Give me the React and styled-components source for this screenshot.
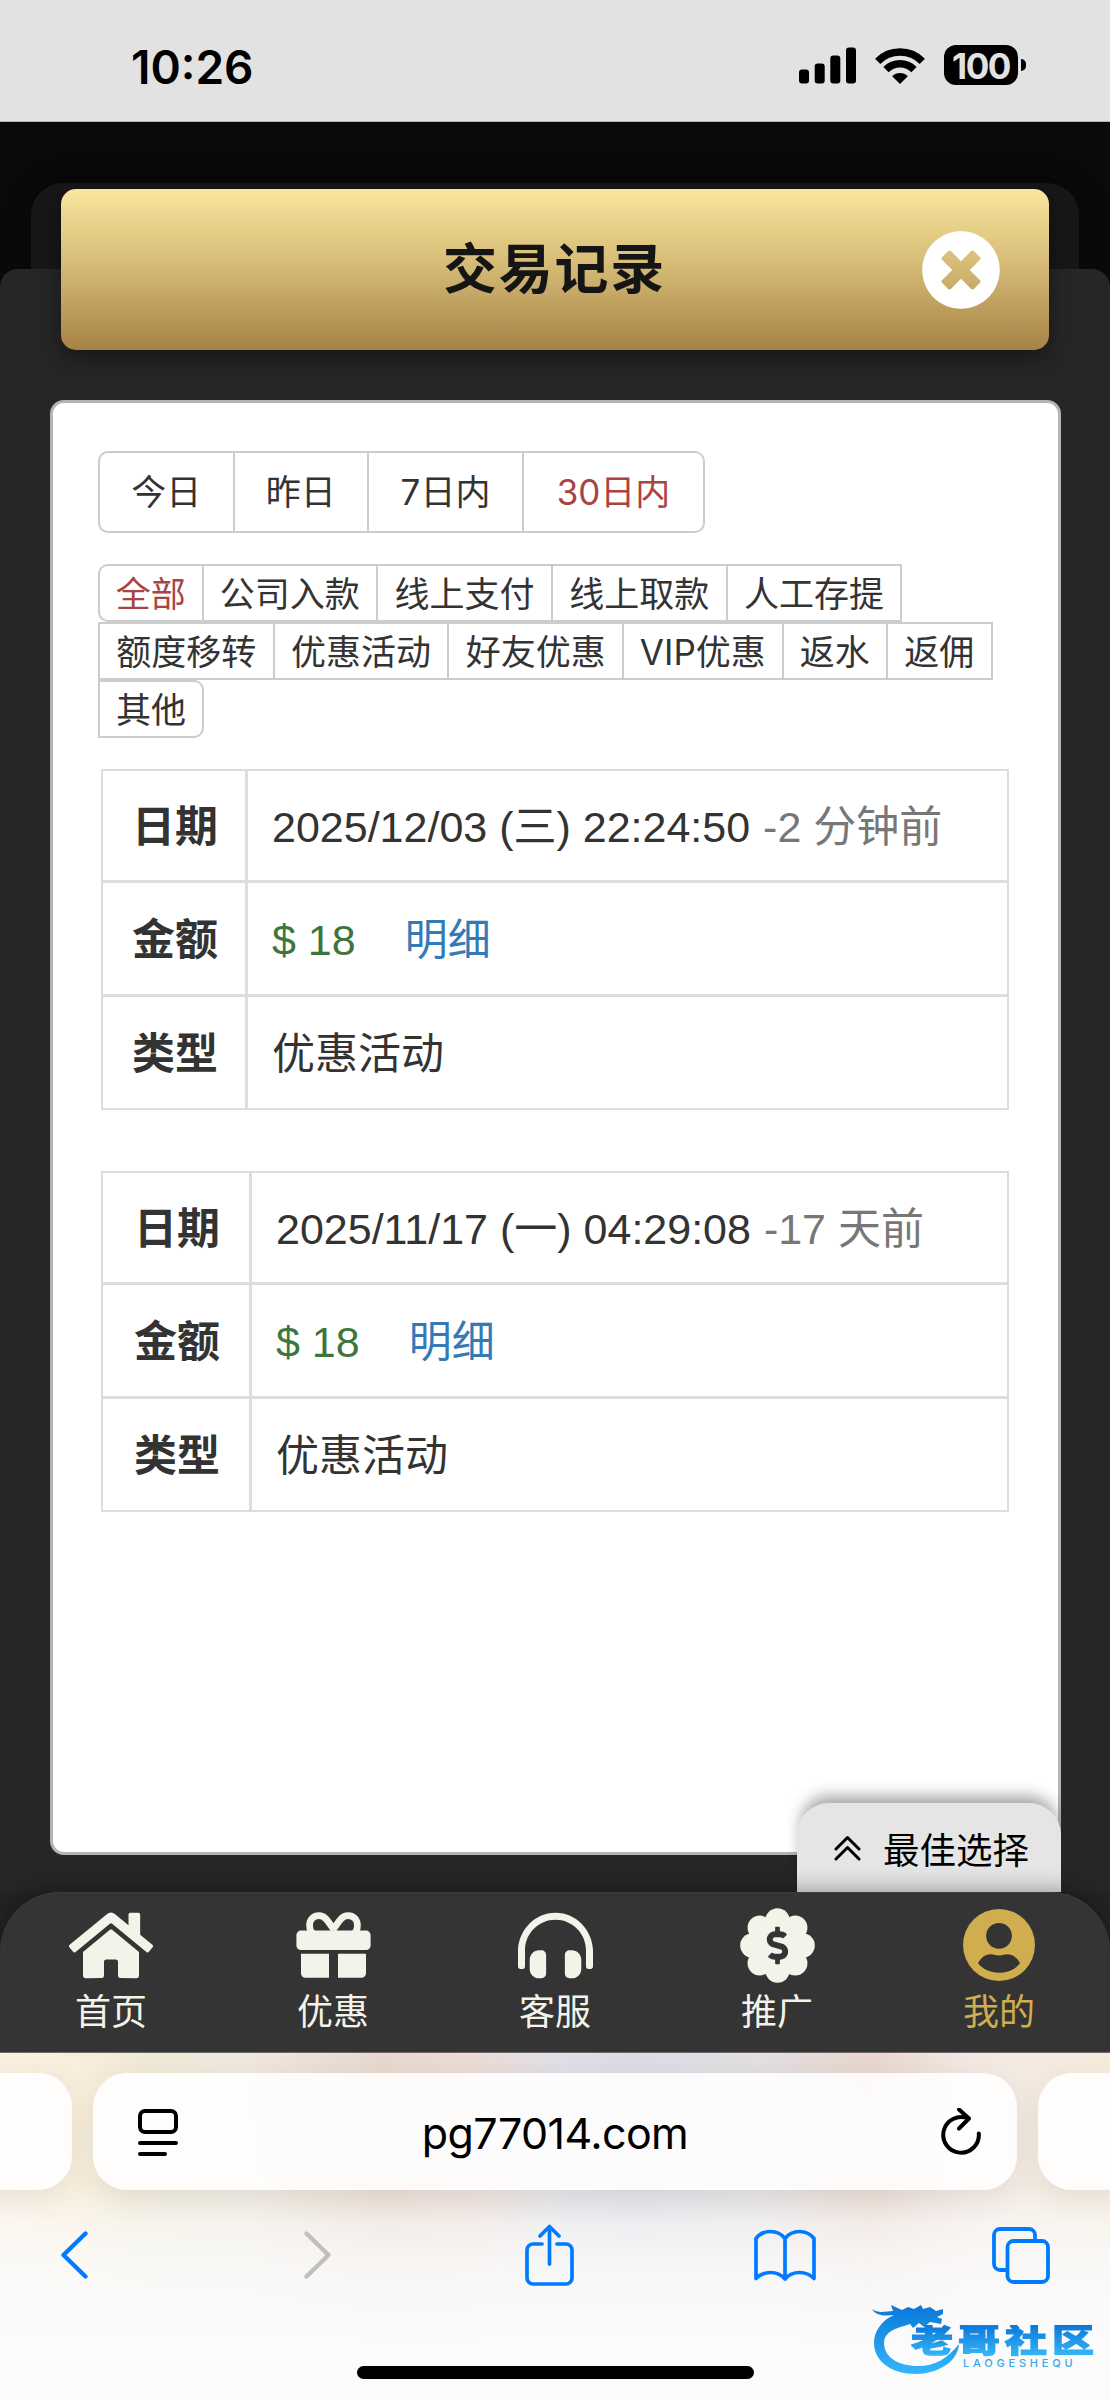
import React, { useState } from "react";
import styled, { createGlobalStyle } from "styled-components";
import {
	FaDollarSign,
	FaHeadphonesAlt,
	FaHome,
	FaTimesCircle,
} from "react-icons/fa";

const GlobalStyle = createGlobalStyle`
	body {
		margin: 0;
		background: #262626;
	}
	* {
		box-sizing: border-box;
	}
`;

const Page = styled.div`
	width: 1110px;
	height: 2400px;
	display: flex;
	flex-direction: column;
	position: relative;
	overflow: hidden;
	font-family: "Inter", "Noto Sans CJK SC", sans-serif;
	color: #333;
`;

//ios status bar
const StatusBar = styled.header`
	height: 122px;
	flex: none;
	display: flex;
	align-items: center;
	padding: 9px 84px 0 131px;
	background: #e2e2e2;
	border-bottom: 1px solid #b4b4b4;
	color: #000;
`;

const Clock = styled.div`
	padding-top: 3px;
	font-size: 46px;
	font-weight: 600;
	line-height: 60px;
	letter-spacing: 0;
	margin-right: auto;
`;

const StatusIcons = styled.div`
	display: flex;
	align-items: center;
	gap: 19px;

	svg {
		display: block;
	}
`;

const Battery = styled.div`
	display: flex;
	align-items: center;
	gap: 3px;

	&::after {
		content: "";
		width: 5px;
		height: 12px;
		border-radius: 0 6px 6px 0;
		background: #000;
	}
`;

const BatteryLevel = styled.div`
	width: 74px;
	height: 40px;
	border-radius: 12px;
	background: #000;
	color: #e2e2e2;
	font-size: 35px;
	font-weight: 700;
	line-height: 42px;
	text-align: center;
	letter-spacing: -1.5px;
`;

//sheets are stacked in the same grid cell
const Main = styled.main`
	height: 1770px;
	flex: none;
	display: grid;
	grid-template-columns: 1110px;
	grid-template-rows: 1770px;
	position: relative;
	background: #0a0a0a;

	> * {
		grid-area: 1 / 1;
	}
`;

const BackSheet = styled.div`
	margin: 61px 31px 0;
	border-radius: 32px 32px 0 0;
	background: #171717;
	box-shadow: 0 0 30px rgba(0, 0, 0, 0.35);
`;

const FrontSheet = styled.div`
	margin-top: 147px;
	border-radius: 18px 18px 0 0;
	background: #262626;
`;

const Content = styled.div`
	display: flex;
	flex-direction: column;
	padding: 67px 49px 0 50px;
`;

const TitleBar = styled.div`
	height: 161px;
	flex: none;
	margin: 0 12px 0 11px;
	padding: 0 48px 0 127px;
	display: flex;
	align-items: center;
	border-radius: 15px;
	background: linear-gradient(#fae69d, #d7bd78 45%, #a78245);
	box-shadow: 0 8px 22px rgba(0, 0, 0, 0.4);
`;

const Title = styled.h1`
	margin: 0;
	flex: 1;
	font-size: 54px;
	line-height: 60px;
	font-weight: 700;
	letter-spacing: 1.8px;
	text-align: center;
	color: #151515;
`;

const CloseButton = styled.button`
	padding: 0;
	border: none;
	background: none;
	color: white;
	font-size: 80px;
	line-height: 0;
`;

const Panel = styled.section`
	height: 1455px;
	flex: none;
	margin-top: 50px;
	padding: 48px 45px 0 45px;
	border: 3px solid #b4b4b4;
	border-radius: 14px;
	background: white;
`;

const FilterRow = styled.div`
	display: flex;
	margin-bottom: ${(p) => p.$gap || 0}px;
`;

const FilterButton = styled.button`
	width: ${(p) => p.$width + 2}px;
	height: ${(p) => (p.$large ? 82 : 58)}px;
	padding: ${(p) => (p.$large ? 0 : 2)}px 0 0;
	margin-right: -2px;
	border: 2px solid #ccc;
	border-radius: ${(p) => p.$radius || "0"};
	background: white;
	color: ${(p) => (p.$active ? "#a94442" : "#333")};
	font-family: inherit;
	font-size: 35px;
	line-height: 50px;
	white-space: nowrap;
`;

const Record = styled.table`
	width: 908px;
	height: 341px;
	margin: ${(p) => p.$top}px 0 0 3px;
	border-collapse: separate;
	border-spacing: 0;
	border: 2px solid #ddd;
	table-layout: fixed;
	font-family: "Liberation Sans", "Noto Sans CJK SC", sans-serif;
	font-size: 43px;
	line-height: 60px;

	th {
		width: ${(p) => p.$head}px;
		padding: 3px 0 0 2px;
		border-right: 3px solid #ddd;
	}
	td {
		padding: 3px 0 0 24px;
		white-space: nowrap;
	}
	tr + tr > * {
		border-top: 3px solid #ddd;
	}
`;

const Ago = styled.span`
	margin-left: 1px;
	color: #777;
`;

const Amount = styled.span`
	color: #3c763d;
`;

const DetailLink = styled.a`
	margin-left: 49px;
	color: #337ab7;
`;

//floats over the panel corner, tucked behind the tab bar
const BestChoice = styled.div`
	position: absolute;
	right: 49px;
	bottom: 0;
	width: 264px;
	height: 89px;
	display: flex;
	align-items: center;
	gap: 22px;
	padding: 6px 0 0 37px;
	border-radius: 32px 32px 0 0;
	background: #e5e5e5;
	box-shadow: 0 -11px 15px -4px rgba(0, 0, 0, 0.36);
	clip-path: inset(-40px 0 0 -10px);
	color: #000;
	font-size: 36.5px;
	line-height: 50px;

	svg {
		margin-bottom: 6px;
	}
`;

const TabBarWrapper = styled.div`
	height: 161px;
	flex: none;
	position: relative;
	background: #232323;
`;

const TabBar = styled.nav`
	height: 161px;
	display: flex;
	border-radius: 60px 60px 0 0;
	background: #343434;
	box-shadow: 0 -4px 20px rgba(0, 0, 0, 0.3), inset 0 1px 0 #3c3c3c;
	border-bottom: 1px solid #6f6868;
`;

const TabItem = styled.a`
	flex: 1;
	display: flex;
	flex-direction: column;
	align-items: center;
	color: ${(p) => (p.$active ? "#d0ae4f" : "#f4f3e9")};
	font-size: 36px;
	line-height: 52px;
`;

const TabIcon = styled.div`
	height: 94px;
	padding-top: 12px;
	display: flex;
	align-items: center;
	line-height: 0;
`;

//safari chrome
const Browser = styled.footer`
	height: 347px;
	flex: none;
	position: relative;
	display: flex;
	flex-direction: column;
	background:
		linear-gradient(
			rgba(251, 251, 251, 0),
			rgba(251, 251, 251, 0.1) 38%,
			rgba(251, 251, 251, 0.6) 50%,
			rgba(251, 251, 251, 0.85) 62%,
			#fbfbfb 82%
		),
		linear-gradient(
			to right,
			#faf0e2,
			#f8eedb 80px,
			#f0ead8 140px,
			#efe8de 250px,
			#e8d9ce 380px,
			#ecdcd7 480px,
			#e0e0e6 560px,
			#dcdde4 630px,
			#e3dfe2 760px,
			#e8d7ce 870px,
			#f3e9e4 970px,
			#f5ecdd
		);
`;

const AddressRow = styled.div`
	display: flex;
	gap: 21px;
	margin: 20px -30px 0;
`;

const Pill = styled.div`
	width: ${(p) => (p.$side ? "102px" : "924px")};
	height: 117px;
	flex: none;
	display: flex;
	align-items: center;
	padding: 0 36px 0 45px;
	border-radius: 34px;
	background: rgba(255, 255, 255, 0.88);
	box-shadow: 0 8px 30px rgba(60, 50, 30, 0.09);
	color: #000;
`;

const Url = styled.div`
	flex: 1;
	margin-right: 9px;
	padding-top: 2px;
	text-align: center;
	font-size: 43px;
	line-height: 60px;
	letter-spacing: -0.6px;
`;

const Toolbar = styled.div`
	height: 130px;
	display: grid;
	grid-template-columns: 243px 221px 229px 238px auto;
	align-items: center;
	padding-left: 61px;
	color: #007aff;
`;

const HomeIndicator = styled.div`
	width: 397px;
	height: 13px;
	margin: 46px auto 0;
	border-radius: 7px;
	background: #000;
`;

const Watermark = styled.div`
	position: absolute;
	left: 870px;
	bottom: 18px;
	width: 230px;
	height: 82px;
	padding: 25px 0 0 41px;
`;

const WatermarkLogo = styled.svg`
	position: absolute;
	left: 0;
	top: 0;
`;

const WatermarkName = styled.div`
	position: relative;
	height: 42px;
	font-family: "Liberation Sans", "Noto Sans CJK SC", sans-serif;
	font-size: 42px;
	line-height: 42px;
	font-weight: 900;
	letter-spacing: 5px;
	white-space: nowrap;
	transform: scaleY(0.76);
	transform-origin: 0 0;
	background: linear-gradient(#0a76d8, #37b9fb);
	background-clip: text;
	-webkit-text-stroke: 1.5px transparent;
	color: transparent;
`;

const WatermarkSub = styled.div`
	position: relative;
	margin: -11px 0 0 52px;
	font-size: 11px;
	line-height: 14px;
	letter-spacing: 3.8px;
	font-weight: 500;
	color: #3aa6ec;
`;

const Stroke = ({ width, height, weight = 4, color, children }) => (
	<svg
		width={width}
		height={height}
		viewBox={`0 0 ${width} ${height}`}
		fill="none"
		stroke={color || "currentColor"}
		strokeWidth={weight}
		strokeLinecap="round"
		strokeLinejoin="round"
	>
		{children}
	</svg>
);

const SignalIcon = () => (
	<svg width="57" height="37" viewBox="0 0 57 37">
		<rect x="0" y="22.5" width="10" height="14" rx="3" />
		<rect x="15.7" y="16.5" width="10" height="20" rx="3" />
		<rect x="31.3" y="8.5" width="10" height="28" rx="3" />
		<rect x="47" y="0.5" width="10" height="36" rx="3" />
	</svg>
);

const WifiIcon = () => (
	<svg width="50" height="37" viewBox="0 0 50 37">
		<g fill="none" stroke="#000" strokeWidth="7.4">
			<path d="M2.7 14.3a31.5 31.5 0 0 1 44.6 0" />
			<path d="M11 22.6a19.8 19.8 0 0 1 28 0" />
		</g>
		<path d="M25 37l-7.8-7.8a11 11 0 0 1 15.6 0z" />
	</svg>
);

const GiftIcon = () => (
	<svg width="75" height="66" viewBox="0 0 75 66" fill="currentColor">
		<g fill="none" stroke="currentColor" strokeWidth="6.8">
			<path d="M38 18C32 9 29 3.6 23 3.6C16.5 3.6 13.6 8.5 13.6 13.5C13.6 17 15 20.5 18 22" />
			<path d="M37 18C43 9 46 3.6 52 3.6C58.5 3.6 61.4 8.5 61.4 13.5C61.4 17 60 20.5 57 22" />
		</g>
		<rect x="0.4" y="18.6" width="74.2" height="19.4" rx="4.5" />
		<path d="M5 41.7h28v24H9.5a4.5 4.5 0 0 1-4.5-4.5z" />
		<path d="M42 41.7h28v19.5a4.5 4.5 0 0 1-4.5 4.5H42z" />
	</svg>
);

const lobes = [0, 45, 90, 135, 180, 225, 270, 315];

const BadgeIcon = () => (
	<svg width="75" height="75" viewBox="0 0 75 75" fill="currentColor">
		<circle cx="37.5" cy="37.5" r="27" />
		{lobes.map((a) => (
			<circle
				key={a}
				cx="37.5"
				cy="12.4"
				r="12.2"
				transform={`rotate(${a} 37.5 37.5)`}
			/>
		))}
		<FaDollarSign x="18.5" y="18.5" size={38} color="#343434" />
	</svg>
);

const UserIcon = () => (
	<svg width="72" height="72" viewBox="0 0 72 72">
		<circle cx="36" cy="36" r="36" fill="currentColor" />
		<circle cx="36" cy="26.8" r="12.9" fill="#343434" />
		<path
			d="M15 54.3C17.5 49 22 45.2 27.5 45.2C30.5 45.2 32 46.4 36 46.4C40 46.4 41.5 45.2 44.5 45.2C50 45.2 54.5 49 57 54.3C52 60.3 44.5 63.8 36 63.8C27.5 63.8 20 60.3 15 54.3Z"
			fill="#343434"
		/>
	</svg>
);

const ranges = [
	{ label: "今日", width: 134.5, radius: "10px 0 0 10px" },
	{ label: "昨日", width: 134.5 },
	{ label: "7日内", width: 155 },
	{ label: "30日内", width: 181, radius: "0 10px 10px 0" },
];

const categories = [
	[
		{ label: "全部", width: 103.5, radius: "10px 0 0 10px" },
		{ label: "公司入款", width: 174.7 },
		{ label: "线上支付", width: 174.7 },
		{ label: "线上取款", width: 174.7 },
		{ label: "人工存提", width: 174.7 },
	],
	[
		{ label: "额度移转", width: 174.7 },
		{ label: "优惠活动", width: 174.7 },
		{ label: "好友优惠", width: 174.7 },
		{ label: "VIP优惠", width: 159.5 },
		{ label: "返水", width: 104.5 },
		{ label: "返佣", width: 104.5 },
	],
	[{ label: "其他", width: 104, radius: "0 10px 10px 0" }],
];

const records = [
	{
		date: "2025/12/03 (三) 22:24:50",
		ago: "-2 分钟前",
		amount: "$ 18",
		type: "优惠活动",
		head: 145,
		top: 31,
	},
	{
		date: "2025/11/17 (一) 04:29:08",
		ago: "-17 天前",
		amount: "$ 18",
		type: "优惠活动",
		head: 149,
		top: 61,
	},
];

const tabs = [
	{ label: "首页", icon: <FaHome style={{ width: 84, height: 75 }} /> },
	{ label: "优惠", icon: <GiftIcon /> },
	{ label: "客服", icon: <FaHeadphonesAlt size={75} /> },
	{ label: "推广", icon: <BadgeIcon /> },
	{ label: "我的", icon: <UserIcon /> },
];

const App = () => {
	const [range, setRange] = useState("30日内");
	const [category, setCategory] = useState("全部");
	return (
		<Page>
			<GlobalStyle />
			<StatusBar>
				<Clock>10:26</Clock>
				<StatusIcons>
					<SignalIcon />
					<WifiIcon />
					<Battery>
						<BatteryLevel>100</BatteryLevel>
					</Battery>
				</StatusIcons>
			</StatusBar>

			<Main>
				<BackSheet />
				<FrontSheet />
				<Content>
					<TitleBar>
						<Title>交易记录</Title>
						<CloseButton>
							<FaTimesCircle />
						</CloseButton>
					</TitleBar>
					<Panel>
						<FilterRow $gap={31}>
							{ranges.map((r) => (
								<FilterButton
									key={r.label}
									$large
									$width={r.width}
									$radius={r.radius}
									$active={r.label === range}
									onClick={() => setRange(r.label)}
								>
									{r.label}
								</FilterButton>
							))}
						</FilterRow>
						{categories.map((row, i) => (
							<FilterRow key={i}>
								{row.map((c) => (
									<FilterButton
										key={c.label}
										$width={c.width}
										$radius={c.radius}
										$active={c.label === category}
										onClick={() => setCategory(c.label)}
									>
										{c.label}
									</FilterButton>
								))}
							</FilterRow>
						))}
						{records.map((r) => (
							<Record key={r.date} $head={r.head} $top={r.top}>
								<tbody>
									<tr>
										<th>日期</th>
										<td>
											{r.date} <Ago>{r.ago}</Ago>
										</td>
									</tr>
									<tr>
										<th>金额</th>
										<td>
											<Amount>{r.amount}</Amount>
											<DetailLink>明细</DetailLink>
										</td>
									</tr>
									<tr>
										<th>类型</th>
										<td>{r.type}</td>
									</tr>
								</tbody>
							</Record>
						))}
					</Panel>
				</Content>
				<BestChoice>
					<Stroke width={27} height={26} weight={3}>
						<path d="M2 14L13.5 2.5L25 14M2 24L13.5 12.5L25 24" />
					</Stroke>
					最佳选择
				</BestChoice>
			</Main>

			<TabBarWrapper>
				<TabBar>
					{tabs.map((t) => (
						<TabItem key={t.label} $active={t.label === "我的"}>
							<TabIcon>{t.icon}</TabIcon>
							{t.label}
						</TabItem>
					))}
				</TabBar>
			</TabBarWrapper>

			<Browser>
				<AddressRow>
					<Pill $side />
					<Pill>
						<Stroke width={40} height={48}>
							<rect x="2" y="3" width="36" height="21" rx="5" />
							<path d="M2 35h36M2 46h25" />
						</Stroke>
						<Url>pg77014.com</Url>
						<Stroke width={40} height={48}>
							<path d="M27 10.5A17.8 17.8 0 1 0 37.8 25.5" />
							<path d="M18 1.5L28 10.5L18 20.5" />
						</Stroke>
					</Pill>
					<Pill $side />
				</AddressRow>
				<Toolbar>
					<Stroke width={27} height={48} weight={4.3}>
						<path d="M24.5 2.5L2.5 24L24.5 45.5" />
					</Stroke>
					<Stroke width={27} height={48} weight={4.3} color="#c0bfbd">
						<path d="M2.5 2.5L24.5 24L2.5 45.5" />
					</Stroke>
					<Stroke width={49} height={62} weight={3.7}>
						<path d="M17 20H8a6 6 0 0 0-6 6V54a6 6 0 0 0 6 6H41a6 6 0 0 0 6-6V26a6 6 0 0 0-6-6H32" />
						<path d="M24.5 40V2.5M15 12L24.5 2.5L34 12" />
					</Stroke>
					<Stroke width={62} height={52} weight={3.7}>
						<path d="M31 9.5C27.5 5 22.5 2.5 16.5 2.5S5.5 5 2 9.5V49.5C5.5 46 10.5 43.5 16.5 43.5S27.5 46 31 50C34.5 46 39.5 43.5 45.5 43.5S56.500 46 60 49.5V9.5C56.500 5 51.500 2.500 45.500 2.500S34.500 5 31 9.500V50" />
					</Stroke>
					<Stroke width={58} height={58} weight={3.8}>
						<rect x="15.5" y="15" width="40.5" height="41" rx="6" />
						<path d="M43 15V9a6 6 0 0 0-6-6H8a6 6 0 0 0-6 6V38a6 6 0 0 0 6 6h7" />
					</Stroke>
				</Toolbar>
				<HomeIndicator />
			</Browser>

			<Watermark>
				<WatermarkLogo width="96" height="76" viewBox="0 0 96 76">
					<defs>
						<linearGradient id="dragon" x1="0" y1="0" x2="0" y2="1">
							<stop offset="0" stopColor="#0878d8" />
							<stop offset="1" stopColor="#34b6fb" />
						</linearGradient>
					</defs>
					<path
						fill="url(#dragon)"
						d="M2 9C9 14 16 11 23 11L21 5L32 10L38 7L44 9L51 5L53 9L60 7L66 11L73 9V14L67 17L72 19L71 24L60 22L54 27L49 23L43 28L40 24L34 26C22 29 14 34 14 43C14 57 28 66 48 66C65 66 77 59 89 44C88 62 67 74 46 74C21 74 4 61 4 43C4 31 12 20 24 15C15 16 6 16 2 9Z"
					/>
				</WatermarkLogo>
				<WatermarkName>老哥社区</WatermarkName>
				<WatermarkSub>LAOGESHEQU</WatermarkSub>
			</Watermark>
		</Page>
	);
};

export default App;
